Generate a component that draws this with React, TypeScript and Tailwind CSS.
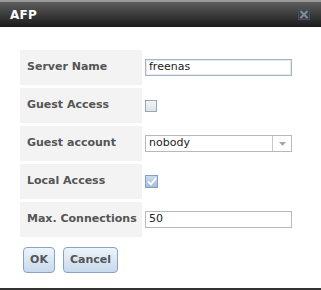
export default function App() {
  const rows = ['Server Name', 'Guest Access', 'Guest account', 'Local Access', 'Max. Connections']

  return (
    <div className="w-[321px] h-[290px] bg-white flex flex-col overflow-hidden" style={{ fontFamily: '"DejaVu Sans", sans-serif' }}>
      <div className="h-[2px] bg-[#9a9a9a]" />
      <div className="h-[25px] flex items-center justify-between pl-[10px] pr-[11px] bg-gradient-to-b from-[#5e5e5e] to-[#1c1c1c]">
        <span className="text-white font-bold text-[12px] tracking-[0.3px]">AFP</span>
        <svg width="12" height="11" viewBox="0 0 12 11">
          <rect x="0.5" y="0.5" width="11" height="10" fill="#3c4248" stroke="#4a5258" strokeWidth="1" />
          <path d="M2.5 2 L9.5 9 M9.5 2 L2.5 9" stroke="#7f8e9e" strokeWidth="2" />
        </svg>
      </div>

      <div className="flex flex-col gap-[3px] pl-[20px] pt-[23px]">
        {rows.map((label, i) => (
          <div key={label} className="flex h-[35px]">
            <div className="w-[122px] bg-[#f3f3f3] flex items-center pl-[7px] text-[11px] font-bold text-[#555] whitespace-nowrap">
              {label}
            </div>
            <div className="flex items-center pl-[3px]">
              {i === 0 && (
                <div className="w-[147px] h-[17px] border border-[#a9b3bf] bg-white flex items-center pl-[3px] text-[11px] text-[#222] shadow-[inset_0_0_0_1px_#e3e9f0]">
                  freenas
                </div>
              )}
              {i === 1 && (
                <div className="w-[12px] h-[12px] border border-[#9da5ae] bg-gradient-to-b from-[#f2f4f7] to-[#dde3ea]" />
              )}
              {i === 2 && (
                <div className="w-[147px] h-[17px] border border-[#b8b8b8] bg-white flex">
                  <div className="flex-1 flex items-center pl-[3px] text-[11px] text-[#222]">nobody</div>
                  <div className="w-[19px] border-l border-[#c8c8c8] flex items-center justify-center">
                    <svg width="7" height="4" viewBox="0 0 7 4">
                      <path d="M0 0 L7 0 L3.5 4 Z" fill="#9aa8b8" />
                    </svg>
                  </div>
                </div>
              )}
              {i === 3 && (
                <div className="w-[13px] h-[13px] border border-[#8aa0b8] bg-gradient-to-b from-[#c9dcef] to-[#9fbfdf] flex items-center justify-center">
                  <svg width="10" height="9" viewBox="0 0 10 9">
                    <path d="M1 4.5 L4 7.5 L9 1" stroke="white" strokeWidth="1.8" fill="none" />
                  </svg>
                </div>
              )}
              {i === 4 && (
                <div className="w-[147px] h-[17px] border border-[#b8b8b8] bg-white flex items-center pl-[3px] text-[11px] text-[#222]">
                  50
                </div>
              )}
            </div>
          </div>
        ))}
      </div>

      <div className="flex gap-[8px] pl-[23px] pt-[10px]">
        <button className="w-[32px] h-[26px] rounded-[4px] border border-[#88a4c4] bg-gradient-to-b from-[#eef4fa] to-[#c6d9ec] text-[11px] font-bold text-[#555]">
          OK
        </button>
        <button className="w-[55px] h-[26px] rounded-[4px] border border-[#88a4c4] bg-gradient-to-b from-[#eef4fa] to-[#c6d9ec] text-[11px] font-bold text-[#555]">
          Cancel
        </button>
      </div>

      <div className="flex-1" />
      <div className="h-[2px] bg-[#333]" />
    </div>
  )
}
